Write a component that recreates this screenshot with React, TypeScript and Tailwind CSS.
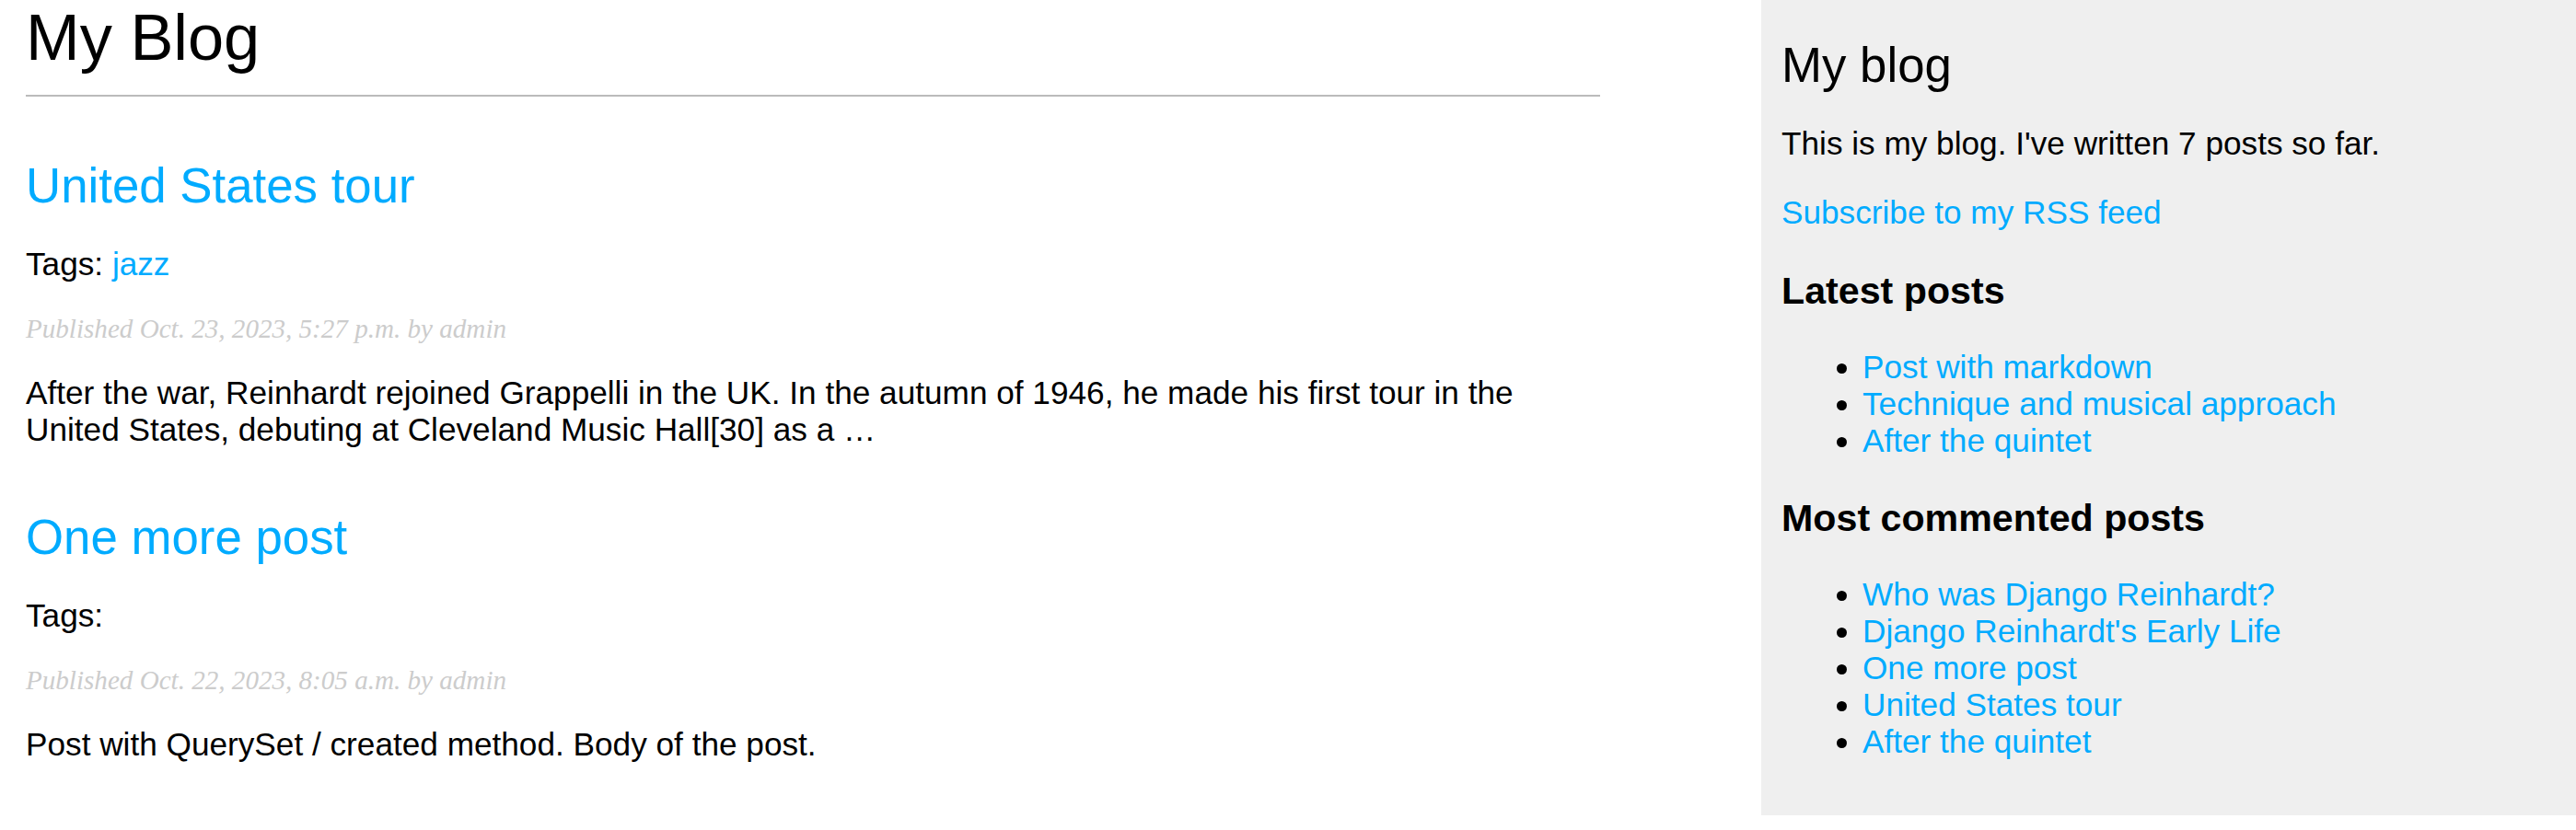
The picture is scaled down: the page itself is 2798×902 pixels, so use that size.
import React from "react";

const link = "text-[#00abff] no-underline";

function Post({
  title,
  tags,
  date,
  body,
}: {
  title: string;
  tags: string[];
  date: string;
  body: React.ReactNode;
}) {
  return (
    <div>
      <h2 className="mt-[66px] text-[52.8px] font-normal">
        <a href="#" className={link}>
          {title}
        </a>
      </h2>
      <p className="mt-[35.2px]">
        Tags:{" "}
        {tags.map((t, i) => (
          <a key={i} href="#" className={link}>
            {t}
          </a>
        ))}
      </p>
      <p className="mt-[35.2px] font-['Liberation_Serif',Georgia,serif] italic text-[29.1px] leading-[30px] text-[#cccccc]">
        {date}
      </p>
      <p className="mt-[34.6px] leading-[39.8px]">{body}</p>
    </div>
  );
}

export default function App() {
  return (
    <div className="flex items-start justify-between bg-white text-black font-['Liberation_Sans',Arial,Helvetica,sans-serif] text-[35.2px] leading-[normal]">
      <div className="w-[1738px] pl-[28px]">
        <h1 className="mt-0 border-b-2 border-[#bbbbbb] pb-[22px] text-[70.4px] font-normal">
          My Blog
        </h1>
        <Post
          title="United States tour"
          tags={["jazz"]}
          date="Published Oct. 23, 2023, 5:27 p.m. by admin"
          body={
            <>
              After the war, Reinhardt rejoined Grappelli in the UK. In the autumn of 1946, he made his first tour in the
              <br />
              United States, debuting at Cleveland Music Hall[30] as a …
            </>
          }
        />
        <Post
          title="One more post"
          tags={[]}
          date="Published Oct. 22, 2023, 8:05 a.m. by admin"
          body="Post with QuerySet / created method. Body of the post."
        />
      </div>
      <div className="w-[885px] bg-[#efefef] px-[22px] pt-[22px] pb-[25px]">
        <h2 className="mt-[18px] text-[52.8px] font-normal">My blog</h2>
        <p className="mt-[35.2px]">This is my blog. I've written 7 posts so far.</p>
        <p className="mt-[35.2px]">
          <a href="#" className={link}>
            Subscribe to my RSS feed
          </a>
        </p>
        <h3 className="mt-[41.2px] text-[41.2px] font-bold">Latest posts</h3>
        <ul className="mt-[39.5px] list-disc pl-[88px]">
          <li>
            <a href="#" className={link}>Post with markdown</a>
          </li>
          <li>
            <a href="#" className={link}>Technique and musical approach</a>
          </li>
          <li>
            <a href="#" className={link}>After the quintet</a>
          </li>
        </ul>
        <h3 className="mt-[40.5px] text-[41.2px] font-bold">Most commented posts</h3>
        <ul className="mt-[39.5px] mb-[35.2px] list-disc pl-[88px]">
          <li>
            <a href="#" className={link}>Who was Django Reinhardt?</a>
          </li>
          <li>
            <a href="#" className={link}>Django Reinhardt's Early Life</a>
          </li>
          <li>
            <a href="#" className={link}>One more post</a>
          </li>
          <li>
            <a href="#" className={link}>United States tour</a>
          </li>
          <li>
            <a href="#" className={link}>After the quintet</a>
          </li>
        </ul>
      </div>
    </div>
  );
}
